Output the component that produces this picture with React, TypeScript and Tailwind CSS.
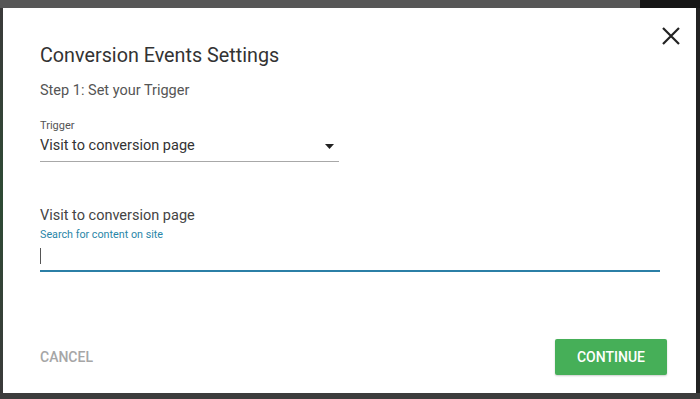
export default function App() {
  return (
    <div className="flex h-[399px] w-[700px] flex-col overflow-hidden bg-[#3c3c3c] font-['Roboto',sans-serif]">
      {/* backdrop top strip */}
      <div className="flex h-[8px] shrink-0">
        <div className="w-[640px] bg-[#575757]" />
        <div className="flex-1 bg-[#161616]" />
      </div>

      <div className="flex h-[385px] shrink-0">
        <div className="w-[3px] bg-gradient-to-b from-[#3a3a3a] via-[#2d4a34] to-[#3a3a3a]" />

        <div className="relative flex w-[693px] flex-col bg-white pl-[37px] pt-[34px]">
          <button className="absolute right-[16px] top-[19px] text-[#222]" aria-label="Close">
            <svg width="18" height="18" viewBox="0 0 18 18" fill="none" stroke="currentColor" strokeWidth="2.2">
              <path d="M1 1l16 16M17 1L1 17" />
            </svg>
          </button>

          <h2 className="text-[19.75px] leading-[28px] text-[#333]">Conversion Events Settings</h2>
          <p className="mt-[11px] text-[14.5px] leading-[20px] text-[#555]">Step 1: Set your Trigger</p>

          <div className="mt-[18px] w-[299px]">
            <div className="text-[11px] leading-[14px] text-[#555]">Trigger</div>
            <div className="mt-[3px] flex items-center justify-between border-b border-[#a8a8a8] pb-[5px]">
              <span className="text-[14.5px] leading-[20px] text-[#333]">Visit to conversion page</span>
              <svg width="9" height="5" viewBox="0 0 9 5" className="mr-[5px] fill-[#222]">
                <path d="M0 0h9L4.5 5z" />
              </svg>
            </div>
          </div>

          <div className="mt-[44px] w-[620px]">
            <div className="text-[14.5px] leading-[20px] text-[#444]">Visit to conversion page</div>
            <div className="mt-[2px] text-[10.75px] leading-[14px] text-[#2a86a8]">Search for content on site</div>
            <div className="flex h-[30px] items-center border-b-2 border-[#2b7fa6]">
              <span className="h-[16px] w-px bg-[#555]" />
            </div>
          </div>

          <div className="mt-auto flex items-center justify-between pb-[18px] pr-[29px]">
            <button className="text-[14px] font-medium uppercase text-[#a6a6a6]">Cancel</button>
            <button className="h-[36px] w-[112px] rounded-[2px] bg-[#46af58] text-[14px] font-medium uppercase text-white shadow-[0_1px_2px_rgba(0,0,0,0.2)]">
              Continue
            </button>
          </div>
        </div>

        <div className="flex-1 bg-[#222]" />
      </div>

      <div className="flex-1 bg-[#3c3c3c]" />
    </div>
  );
}
